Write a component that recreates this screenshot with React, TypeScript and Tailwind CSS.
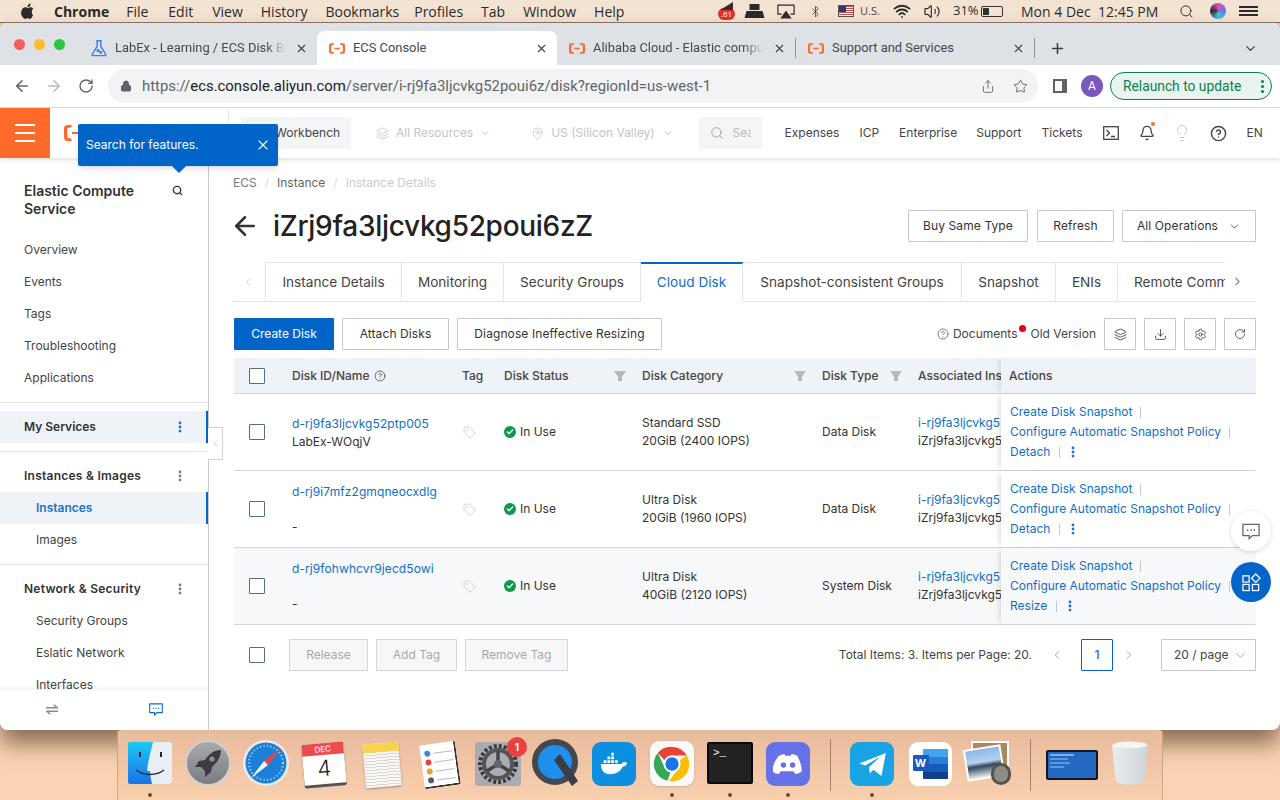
import React from "react";
import { ArrowLeft, ArrowRight, RotateCw, Lock, Share, Star, X, Plus, ChevronDown, ChevronLeft, ChevronRight, Search, MoreVertical, CircleHelp, Tag, Layers, Download, Settings, RotateCw as Rot, Bell, Lightbulb, MapPin, Wifi, Bluetooth, Volume2, Check } from "lucide-react";

const Ali = ({ className = "" }: { className?: string }) => (
  <svg viewBox="0 0 24 16" className={className} fill="#ff6a2b">
    <path d="M8 0H3.5A3.5 3.5 0 0 0 0 3.5v9A3.5 3.5 0 0 0 3.5 16H8l-1-2.4-3-.6a1 1 0 0 1-.8-1V4a1 1 0 0 1 .8-1l3-.6zM16 0h4.500A3.500 3.500 0 0 1 24 3.500v9a3.500 3.500 0 0 1-3.500 3.500H16l1-2.400 3-.6a1 1 0 0 0 .8-1V4a1 1 0 0 0-.8-1l-3-.6zM8 7h8v2H8z" />
  </svg>
);

const Flask = () => (
  <svg viewBox="0 0 20 20" className="w-[18px] h-[18px] shrink-0" fill="none" stroke="#3b82e6" strokeWidth="1.6">
    <path d="M7 2h6M8 2v6L2.500 17a1 1 0 0 0 1 1.500h13a1 1 0 0 0 1-1.500L12 8V2" />
    <circle cx="9" cy="13" r="1" fill="#3b82e6" /><circle cx="12" cy="15" r=".8" fill="#3b82e6" />
  </svg>
);

const Bubble = ({ className = "", stroke, sw = 1.4 }: { className?: string; stroke: string; sw?: number }) => (
  <svg viewBox="0 0 20 18" className={className} fill="none" stroke={stroke} strokeWidth={sw}>
    <path d="M1 1h18v12.500h-7.500L8 17v-3.500H1z" />
    <path d="M5.500 7.500h1.500M9.300 7.500h1.500M13 7.500h1.500" strokeWidth="1.800" />
  </svg>
);

const ChromeTab = ({ icon, title, active, sep, w, fade }: { icon: React.ReactNode; title: string; active?: boolean; sep?: boolean; w: string; fade?: boolean }) => (
  <div className={`${w} h-[34px] flex items-center relative shrink-0 ${active ? "bg-white rounded-t-lg" : ""}`}>
    <div className="w-[36px] flex justify-center shrink-0 pl-1">{icon}</div>
    <span className={`flex-1 text-[12.9px] overflow-hidden whitespace-nowrap text-[#45484d] ${fade ? "[mask-image:linear-gradient(to_right,black_88%,transparent)]" : ""}`}>{title}</span>
    <X className="w-[13px] h-[13px] text-[#3c4043] mx-[9px] shrink-0" strokeWidth={2} />
    {sep && <div className="w-px h-5 bg-[#8d9096] shrink-0" />}
  </div>
);

const Side = ({ children, cls = "" }: { children: React.ReactNode; cls?: string }) => (
  <div className={`h-8 flex items-center text-[12px] text-[#444] ${cls}`}>{children}</div>
);

const Dots = ({ cls = "" }: { cls?: string }) => <MoreVertical className={`w-[14px] h-[14px] ${cls}`} strokeWidth={2.8} />;

const Btn = ({ children, cls = "" }: { children: React.ReactNode; cls?: string }) => (
  <div className={`h-8 border border-[#c4c6cc] rounded-[1px] bg-white flex items-center justify-center text-[12px] tracking-[.1px] text-[#333] ${cls}`}>{children}</div>
);

const Funnel = () => (
  <svg viewBox="0 0 12 12" className="w-[12px] h-[12px]" fill="#b5b7ba"><path d="M0 1h12L8 6.500V11H4V6.500z" /></svg>
);

const Checkbox = () => <div className="w-4 h-4 border border-[#4f6e8e] rounded-[1px] bg-white" />;

const Row = ({ id, name, cat, size, type, last, hl }: { id: string; name: string; cat: string; size: string; type: string; last: string; hl?: boolean }) => (
  <div className={`grid grid-cols-[58px_170px_42px_138px_180px_96px_83px_255px] h-[77px] border-b border-[#d5d6d9] text-[12px] text-[#333] items-center ${hl ? "bg-[#f7f8fa]" : "bg-white"}`}>
    <div className="pl-[15px]"><Checkbox /></div>
    <div className={`flex flex-col self-stretch ${name === "-" ? "justify-between py-[13px]" : "justify-center gap-[3px]"}`}>
      <span className="text-[#0f6fc6] leading-[15px] whitespace-nowrap tracking-[.09px]">{id}</span>
      <span className="leading-[15px]">{name}</span>
    </div>
    <div><Tag className="w-[13px] h-[13px] text-[#c8c9cc] ml-[1px]" strokeWidth={1.5} /></div>
    <div className="flex items-center gap-[4px]">
      <span className="w-3 h-3 rounded-full bg-[#0a9a4a] flex items-center justify-center"><Check className="w-2 h-2 text-white" strokeWidth={4} /></span>
      In Use
    </div>
    <div className="leading-[18px]"><div>{cat}</div><div>{size}</div></div>
    <div>{type}</div>
    <div className="overflow-hidden whitespace-nowrap leading-[18px]"><div className="text-[#0f6fc6]">i-rj9fa3ljcvkg52poui6z</div><div>iZrj9fa3ljcvkg52poui6zZ</div></div>
    <div className={`self-stretch pl-[9px] flex flex-col justify-center leading-[20px] text-[#0f6fc6] shadow-[-4px_0_5px_-2px_rgba(0,0,0,0.12)] ${hl ? "bg-[#f7f8fa]" : "bg-white"}`}>
      <div className="flex items-center">Create Disk Snapshot<span className="w-px h-[11px] bg-[#c4c6cc] ml-[8px]" /></div>
      <div className="flex items-center">Configure Automatic Snapshot Policy<span className="w-px h-[11px] bg-[#c4c6cc] ml-[8px]" /></div>
      <div className="flex items-center">{last}<span className="w-px h-[11px] bg-[#c4c6cc] ml-[9px]" /><Dots cls="ml-[6px]" /></div>
    </div>
  </div>
);

const Slot = ({ children, dot }: { children: React.ReactNode; dot?: boolean }) => (
  <div className="w-[58px] h-full relative flex justify-center pt-[12px] shrink-0">
    {children}
    {dot && <span className="absolute bottom-[3px] left-[27px] w-1 h-1 rounded-full bg-[#6b4a35]" />}
  </div>
);

const DockSep = () => <div className="w-[26px] flex justify-center shrink-0 pt-[9px]"><div className="w-px h-[52px] bg-[#a9826a]" /></div>;

const Finder = () => (
  <svg viewBox="0 0 44 42" className="w-[44px] h-[42px]">
    <defs><linearGradient id="fb" x1="0" y1="0" x2="0" y2="1"><stop offset="0" stopColor="#1cc8f5" /><stop offset="1" stopColor="#1a72e8" /></linearGradient></defs>
    <rect width="44" height="42" rx="2" fill="url(#fb)" />
    <path d="M25 0h17a2 2 0 0 1 2 2v38a2 2 0 0 1-2 2H24c-1-5-2-9-2-13h-3c1-11 4-20 6-29z" fill="#e8eef4" />
    <rect x="11" y="10" width="2" height="5" fill="#223" /><rect x="32" y="10" width="2" height="5" fill="#223" />
    <path d="M8 28c8 6 20 6 28 0" fill="none" stroke="#1b2a40" strokeWidth="1.500" />
  </svg>
);
const Launchpad = () => (
  <svg viewBox="0 0 46 46" className="w-[46px] h-[46px] -mt-[2px]">
    <defs><linearGradient id="lp" x1="0" y1="0" x2="0" y2="1"><stop offset="0" stopColor="#a8aaac" /><stop offset="1" stopColor="#7a7d80" /></linearGradient></defs>
    <circle cx="23" cy="23" r="23" fill="#cdcfd1" /><circle cx="23" cy="23" r="21" fill="url(#lp)" />
    <path d="M36 10c-7 0-12 4-16 10l-6 1-4 6 6 0 4 4 0 6 6-5 1-5c6-5 9-11 9-17z" fill="#3a3c3f" />
    <circle cx="27" cy="19" r="2.600" fill="#8f9295" />
  </svg>
);
const Safari = () => (
  <svg viewBox="0 0 46 46" className="w-[46px] h-[46px] -mt-[2px]">
    <circle cx="23" cy="23" r="23" fill="#e8eaec" /><circle cx="23" cy="23" r="20.500" fill="#1d80d8" />
    <circle cx="23" cy="23" r="17" fill="none" stroke="#bfe0f7" strokeWidth="2" strokeDasharray="1 2.500" />
    <path d="M38 8 25 25l-4-4z" fill="#f0423c" /><path d="M8 38l13-17 4 4z" fill="#f4f4f4" />
  </svg>
);
const Calendar = () => (
  <div className="w-[42px] h-[44px] rotate-[-5deg] bg-[#59595c] rounded-[2px] pb-[3px] mt-[1px]">
    <div className="bg-white h-full rounded-[1px] overflow-hidden flex flex-col items-center shadow-sm">
      <div className="w-full h-[12px] bg-[#ec4c50] text-white text-[8px] leading-[12px] text-center">DEC</div>
      <div className="text-[#222] text-[22px] leading-[26px] font-light">4</div>
    </div>
  </div>
);
const Notes = () => (
  <div className="w-[36px] h-[44px] rotate-[-5deg] bg-[#f8f7f2] shadow-[0_1px_2px_rgba(0,0,0,.35)] mt-[1px] [background-image:repeating-linear-gradient(to_bottom,transparent_0,transparent_2px,#d8d8d4_2px,#d8d8d4_3px)]">
    <div className="h-[9px] bg-[#f8d34f]" />
  </div>
);
const Reminders = () => (
  <div className="w-[36px] h-[44px] rotate-[-8deg] bg-white border-r-2 border-b-2 border-[#333] rounded-[2px] flex flex-col gap-[3px] pl-[4px] pt-[6px] mt-[1px]">
    {["#3a86e8", "#ea4040", "#f39a2e", "#555a60"].map((c) => (
      <div key={c} className="flex items-center gap-[3px]"><span className="w-[6px] h-[6px] rounded-full" style={{ background: c }} /><span className="w-[19px] h-px bg-[#bbb]" /></div>
    ))}
  </div>
);
const Prefs = () => (
  <div className="w-[46px] h-[44px] bg-[#a9acb0] rounded-[3px] flex items-center justify-center relative">
    <svg viewBox="0 0 40 40" className="w-[40px] h-[40px]">
      <circle cx="20" cy="20" r="18" fill="none" stroke="#3a3b3d" strokeWidth="4" strokeDasharray="3 2" />
      <circle cx="20" cy="20" r="14" fill="none" stroke="#555" strokeWidth="4" />
      <path d="M20 20V7M20 20 9 27M20 20l11 7" stroke="#444" strokeWidth="3.500" />
      <circle cx="20" cy="20" r="4" fill="#666" />
    </svg>
    <span className="absolute -top-[5px] -right-[6px] w-[20px] h-[20px] rounded-full bg-[#ee3f3f] text-white text-[10px] font-bold flex items-center justify-center">1</span>
  </div>
);
const Quick = () => (
  <svg viewBox="0 0 48 48" className="w-[48px] h-[48px] -mt-[3px]">
    <circle cx="23" cy="23" r="20" fill="#1f8fee" stroke="#45494f" strokeWidth="6" />
    <path d="M22 21l6-6 18 27-6 5z" fill="#3a3d42" />
  </svg>
);
const Docker = () => (
  <div className="w-[44px] h-[44px] rounded-[9px] bg-[#0d8fe0] flex items-center justify-center">
    <svg viewBox="0 0 32 24" className="w-[30px] h-[24px]" fill="#fff">
      <path d="M2 12h22c1-2 4-3 6-1-1 3-3 4-5 4-2 5-7 8-13 8-7 0-10-5-10-11z" />
      <path d="M5 8h3v3H5zM9 8h3v3H9zM13 8h3v3h-3zM17 8h3v3h-3zM9 4h3v3H9zM13 4h3v3h-3zM13 0h3v3h-3z" />
    </svg>
  </div>
);
const ChromeIcon = () => (
  <div className="w-[44px] h-[45px] rounded-[9px] bg-[#fafafa] flex items-center justify-center shadow-[0_1px_2px_rgba(0,0,0,.15)] -mt-[1px]">
    <svg viewBox="0 0 40 40" className="w-[38px] h-[38px]">
      <path d="M20 2a18 18 0 0 1 15.600 9H20a9 9 0 0 0-8 5L5 8.500A18 18 0 0 1 20 2z" fill="#ea4335" />
      <path d="M5 8.500 12.500 24a9 9 0 0 0 6 5L15 37.500A18 18 0 0 1 5 8.500z" fill="#34a853" />
      <path d="M35.600 11A18 18 0 0 1 17 38l8-11a9 9 0 0 0 3-11z" fill="#fbbc04" />
      <circle cx="20" cy="20" r="9" fill="#fff" /><circle cx="20" cy="20" r="7" fill="#1a73e8" />
    </svg>
  </div>
);
const Term = () => (
  <div className="w-[46px] h-[42px] bg-[#222] border-2 border-[#0a0a0a] rounded-[2px] text-white text-[11px] leading-[13px] pl-[4px] pt-[3px] font-['Liberation_Mono',monospace]">&gt;_</div>
);
const Discord = () => (
  <div className="w-[44px] h-[44px] rounded-[9px] bg-[#6673e8] flex items-center justify-center">
    <svg viewBox="0 0 32 24" className="w-[30px] h-[22px]" fill="#fff">
      <path d="M6 3c3-1 5-2 6-2l1 2h6l1-2c2 0 4 1 6 2 3 5 5 11 5 17-2 2-5 3-7 3l-2-3h-14l-2 3c-2 0-5-1-7-3 0-6 3-12 7-17z" />
      <circle cx="11" cy="13" r="3" fill="#6673e8" /><circle cx="21" cy="13" r="3" fill="#6673e8" />
    </svg>
  </div>
);
const Telegram = () => (
  <div className="w-[44px] h-[44px] rounded-[9px] bg-[#18a3e4] flex items-center justify-center">
    <svg viewBox="0 0 32 28" className="w-[29px] h-[25px]" fill="#fff"><path d="M1 13 31 1l-5 26-9-7-4 4-1-7 13-12-17 10z" /></svg>
  </div>
);
const Word = () => (
  <div className="w-[43px] h-[44px] rounded-[9px] bg-white flex items-center justify-center relative">
    <div className="w-[25px] h-[30px] ml-[10px] flex flex-col rounded-[1px] overflow-hidden">
      <div className="flex-1 bg-[#41a5ee]" /><div className="flex-1 bg-[#2b7cd3]" /><div className="flex-1 bg-[#185abd]" /><div className="flex-1 bg-[#103f91]" />
    </div>
    <span className="absolute left-[4px] top-[13px] w-[16px] h-[16px] bg-[#185abd] text-white text-[11px] font-bold rounded-[1px] flex items-center justify-center">W</span>
  </div>
);
const Preview = () => (
  <div className="w-[46px] h-[44px] relative -mt-[1px]">
    <div className="absolute left-[6px] top-0 w-[38px] h-[30px] bg-[#a68a66] border-2 border-white" />
    <div className="absolute left-0 top-[6px] w-[38px] h-[32px] rotate-[-9deg] border-2 border-white bg-[linear-gradient(to_bottom,#8db7e8_0%,#b5d0ee_45%,#30485c_60%,#e8eef2_100%)]" />
    <div className="absolute right-0 bottom-0 w-[20px] h-[22px] rounded-full bg-[#8e8c88] border-[3px] border-[#55534f]" />
  </div>
);
const Thumb = () => (
  <div className="w-[52px] h-[30px] mt-[8px] bg-[#2469c0] border-2 border-[#15191f] rounded-[2px] flex flex-col gap-[2px] p-[2px]">
    <div className="h-[2px] w-[24px] bg-[#7fb0e8]" /><div className="h-[2px] w-[18px] bg-[#5a98e0]" /><div className="h-[2px] w-[20px] bg-[#5a98e0]" /><div className="h-[2px] w-[14px] bg-[#5a98e0]" />
  </div>
);
const Trash = () => (
  <svg viewBox="0 0 40 48" className="w-[38px] h-[48px] -mt-[3px]">
    <defs><linearGradient id="tr" x1="0" y1="0" x2="1" y2="0"><stop offset="0" stopColor="#e9ecee" /><stop offset="1" stopColor="#cfd4d8" /></linearGradient></defs>
    <path d="M1 5c8-5 30-5 38 0l-4 38c-2 5-28 5-30 0z" fill="url(#tr)" />
    <ellipse cx="20" cy="5" rx="18" ry="3.500" fill="#f4f6f7" />
  </svg>
);

const Tab = ({ t, w, active, last }: { t: string; w: string; active?: boolean; last?: boolean }) => (
  <div className={`${w} h-[40px] shrink-0 flex items-center text-[13.6px] whitespace-nowrap overflow-hidden border-r border-[#e3e4e6] ${last ? "justify-start pl-[16px] border-r-0" : "justify-center"} ${active ? "text-[#0f6fc6] border-t-2 border-t-[#0064c8] bg-white border-b border-b-white -mb-px" : "text-[#444] border-t border-t-[#e3e4e6]"}`}>{t}</div>
);

export default function App() {
  return (
    <div className="w-[1280px] h-[800px] overflow-hidden relative bg-[linear-gradient(to_bottom,#f0c6a8,#fbd3b2)] font-['Inter',sans-serif] flex flex-col">
      {/* mac menu bar */}
      <div className="h-[23px] shrink-0 bg-[#f3e3d3] flex items-center text-[14px] text-[#2b2b2b] font-['Open_Sans',sans-serif] pl-[21px] pr-[22px] border-b border-[#8a7566]">
        <svg viewBox="0 0 14 17" className="w-[13px] h-[16px] mr-[20px]" fill="#2b2b2b"><path d="M11.600 9c0-2 1.600-3 1.700-3-1-1.400-2.400-1.600-3-1.600-1.200-.1-2.400.8-3 .8s-1.600-.8-2.700-.7C3.200 4.500 1.900 5.300 1.200 6.500-.3 9-.8 13 2.700 16c.7 1 1.500 1 2 1 .8 0 1.200-.6 2.400-.6s1.500.6 2.500.6c1 0 1.700-1 2.300-2 .7-1 1-2 1-2.100-.1 0-1.300-1-1.300-3.900zM9.500 3c.6-.7 1-1.700.9-2.700-.9 0-1.900.6-2.500 1.300-.5.600-1 1.600-.9 2.600 1 .1 2-.5 2.500-1.200z" /></svg>
        <span className="font-bold mr-[17px]">Chrome</span>
        <span className="mr-[20px]">File</span><span className="mr-[19px]">Edit</span><span className="mr-[18px]">View</span><span className="mr-[18px]">History</span><span className="mr-[15px]">Bookmarks</span><span className="mr-[18px]">Profiles</span><span className="mr-[18px]">Tab</span><span className="mr-[18px]">Window</span><span>Help</span>
        <div className="ml-auto flex items-center text-[14px]">
          <span className="relative w-[17px] h-[12px] rounded-full bg-[#e0322a] text-white text-[8px] flex items-center justify-center mt-[6px] mr-[9px] leading-none">
            .61
            <svg viewBox="0 0 16 8" className="absolute -top-[6px] left-0 w-[16px] h-[8px]" fill="#3a2a25"><path d="M2 8 15 0v8z" /></svg>
          </span>
          <svg viewBox="0 0 20 14" className="w-[21px] h-[14px] mr-[12px]" fill="#2b2b2b"><path d="M5 0h10v6H5zM2 7h16l2 7H0z" /></svg>
          <svg viewBox="0 0 20 16" className="w-[18px] h-[15px] mr-[14px]" fill="none" stroke="#2b2b2b" strokeWidth="1.300"><path d="M5 11H1V1h18v10h-4" /><path d="M10 8l5 7H5z" fill="#2b2b2b" /></svg>
          <Bluetooth className="w-[13px] h-[15px] mr-[16px]" strokeWidth={1.300} />
          <span className="w-[16px] h-[12px] mr-[6px] border border-[#555] bg-[repeating-linear-gradient(to_bottom,#c0504d_0,#c0504d_1px,#fff_1px,#fff_2px)] relative"><span className="absolute left-0 top-0 w-[7px] h-[6px] bg-[#2a3a78]" /></span>
          <span className="text-[11px] w-[20px] mr-[12px] text-[#444]">U.S.</span>
          <Wifi className="w-[20px] h-[18px] mr-[10px]" strokeWidth={2.400} />
          <Volume2 className="w-[20px] h-[17px] mr-[11px]" strokeWidth={1.600} />
          <span className="text-[13px] w-[23px] mr-[5px] whitespace-nowrap">31%</span>
          <span className="w-[22px] h-[11px] border border-[#333] rounded-[2px] flex p-[1px] mr-[18px]"><span className="w-[6px] bg-[#333]" /></span>
          <span className="mr-[8px] w-[69px] whitespace-nowrap">Mon 4 Dec</span><span className="mr-[21px] w-[60px] whitespace-nowrap">12:45 PM</span>
          <Search className="w-[15px] h-[15px] mr-[16px]" strokeWidth={1.500} />
          <span className="w-[16px] h-[16px] rounded-full bg-[conic-gradient(#e54ea8,#5b7bea,#49c6d8,#2a2a38,#e54ea8)] mr-[13px]" />
          <span className="w-[19px] flex flex-col gap-[2.500px]"><span className="h-[1.500px] bg-[#2b2b2b]" /><span className="h-[1.500px] bg-[#2b2b2b]" /><span className="h-[1.500px] bg-[#2b2b2b]" /></span>
        </div>
      </div>

      {/* browser window */}
      <div className="w-[1280px] h-[707px] shrink-0 flex flex-col rounded-[8px] overflow-hidden bg-white shadow-[0_14px_22px_rgba(50,30,15,0.55)] relative z-10">
        <div className="h-[42px] bg-[#dee1e6] flex items-end shrink-0 pl-[79px] font-['Roboto',sans-serif]">
          <div className="absolute left-[14px] top-[16px] flex gap-[9px]">
            <span className="w-[11px] h-[11px] rounded-full bg-[#f25f58]" /><span className="w-[11px] h-[11px] rounded-full bg-[#fbbc2e]" /><span className="w-[11px] h-[11px] rounded-full bg-[#29c840]" />
          </div>
          <ChromeTab w="w-[238px]" icon={<Flask />} title="LabEx - Learning / ECS Disk Basics" fade />
          <ChromeTab w="w-[240px]" icon={<Ali className="w-[16px] h-[11px]" />} title="ECS Console" active />
          <ChromeTab w="w-[239px]" icon={<Ali className="w-[16px] h-[11px]" />} title="Alibaba Cloud - Elastic compute service" sep fade />
          <ChromeTab w="w-[239px]" icon={<Ali className="w-[16px] h-[11px]" />} title="Support and Services" sep />
          <Plus className="w-[17px] h-[17px] text-[#3c4043] ml-[14px] mb-[8px]" strokeWidth={2.200} />
          <ChevronDown className="w-[15px] h-[15px] text-[#3c4043] ml-[177px] mb-[9px]" />
        </div>
        <div className="h-[43px] shrink-0 flex items-center border-b border-[#dadce0] font-['Roboto',sans-serif] pl-[13px]">
          <ArrowLeft className="w-[18px] h-[18px] text-[#5f6368]" strokeWidth={2} />
          <ArrowRight className="w-[18px] h-[18px] text-[#b6b8bb] ml-[14px]" strokeWidth={2} />
          <RotateCw className="w-[16px] h-[16px] text-[#5f6368] ml-[15px]" strokeWidth={2} />
          <div className="w-[930px] h-[34px] ml-[14px] rounded-full bg-[#f1f3f4] flex items-center pl-[12px] text-[14.9px]">
            <Lock className="w-[12px] h-[12px] text-[#5f6368] mr-[10px]" fill="#5f6368" />
            <span className="text-[#5f6368]">https://<span className="text-[#202124]">ecs.console.aliyun.com</span>/server/i-rj9fa3ljcvkg52poui6z/disk?regionId=us-west-1</span>
            <Share className="w-[14px] h-[15px] text-[#5f6368] ml-auto" strokeWidth={1.500} />
            <Star className="w-[15px] h-[15px] text-[#5f6368] ml-[18px] mr-[10px]" strokeWidth={1.500} />
          </div>
          <div className="w-[14px] h-[14px] ml-[15px] border-2 border-[#5f6368] border-r-[5px] bg-white" />
          <div className="w-[22px] h-[22px] ml-[14px] rounded-full bg-[#7b57bd] text-white text-[12px] flex items-center justify-center">A</div>
          <div className="w-[162px] h-[28px] ml-[7px] rounded-full border border-[#0d7f4e] bg-[#e9f4ee] text-[#0d7f4e] text-[13.8px] flex items-center pl-[12px]">
            Relaunch to update
            <span className="ml-auto mr-[7px] flex flex-col gap-[2px]"><span className="w-[3px] h-[3px] rounded-full bg-[#0d7f4e]" /><span className="w-[3px] h-[3px] rounded-full bg-[#0d7f4e]" /><span className="w-[3px] h-[3px] rounded-full bg-[#0d7f4e]" /></span>
          </div>
        </div>

        {/* console top nav */}
        <div className="h-[50px] shrink-0 flex items-center bg-white shadow-[0_2px_4px_rgba(0,0,0,0.12)] relative z-20 text-[12px] text-[#444]">
          <div className="w-[50px] h-[50px] bg-[#ff6a2b] flex flex-col items-center justify-center gap-[6px]">
            <span className="w-[20px] h-[2px] bg-white" /><span className="w-[20px] h-[2px] bg-white" /><span className="w-[20px] h-[2px] bg-white" />
          </div>
          <div className="w-[179px] h-full border-r border-[#e8e9eb] pl-[14px] flex items-center"><Ali className="w-[24px] h-[16px]" /></div>
          <div className="w-[110px] h-[32px] ml-[12px] bg-[#f4f5f7] flex items-center pl-[34px]">Workbench</div>
          <div className="ml-[25px] flex items-center text-[#c2c4c8]">
            <Layers className="w-[13px] h-[13px] mr-[7px]" strokeWidth={1.500} />All Resources
            <ChevronDown className="w-[12px] h-[12px] ml-[6px]" />
          </div>
          <div className="ml-[40px] flex items-center text-[#c2c4c8]">
            <MapPin className="w-[13px] h-[13px] mr-[7px]" strokeWidth={1.500} />US (Silicon Valley)
            <ChevronDown className="w-[12px] h-[12px] ml-[7px]" />
          </div>
          <div className="w-[63px] h-[32px] ml-[25px] bg-[#f4f5f7] flex items-center pl-[11px] text-[#bbb] overflow-hidden">
            <Search className="w-[14px] h-[14px] text-[#999] mr-[9px] shrink-0" strokeWidth={1.500} /><span className="w-[18px] overflow-hidden whitespace-nowrap">Search</span>
          </div>
          <span className="ml-[23px]">Expenses</span><span className="ml-[20px]">ICP</span><span className="ml-[20px]">Enterprise</span><span className="ml-[19px]">Support</span><span className="ml-[20px]">Tickets</span>
          <svg viewBox="0 0 16 14" className="w-[16px] h-[14px] ml-[20px]" fill="none" stroke="#444" strokeWidth="1.300"><rect x=".7" y=".7" width="14.600" height="12.600" /><path d="M3.500 4 6.500 7l-3 3M8 10.500h4" /></svg>
          <span className="relative ml-[20px]"><Bell className="w-[16px] h-[16px]" strokeWidth={2} /><span className="absolute -top-[3px] right-0 w-[4px] h-[4px] rounded-full bg-[#ff6a2b]" /></span>
          <Lightbulb className="w-[18px] h-[18px] ml-[18px] text-[#c4c6c9]" strokeWidth={1.300} />
          <CircleHelp className="w-[17px] h-[17px] ml-[19px]" strokeWidth={2} />
          <span className="ml-[20px]">EN</span>
        </div>

        {/* console body */}
        <div className="flex-1 flex min-h-0 relative">
          <aside className="w-[209px] shrink-0 border-r border-[#c9cacc] relative flex flex-col overflow-hidden">
            <div className="flex-1 min-h-0 overflow-hidden pt-[24px]">
              <div className="pl-[24px] pr-[25px] flex justify-between items-start text-[14px] leading-[18px] font-semibold text-[#333]">
                <span>Elastic Compute<br />Service</span>
                <Search className="w-[11px] h-[11px] mt-[3px]" strokeWidth={3} />
              </div>
              <div className="mt-[16px]">
                {["Overview", "Events", "Tags", "Troubleshooting", "Applications"].map((t) => <Side key={t} cls="pl-[24px]">{t}</Side>)}
              </div>
              <div className="h-px bg-[#e3e4e6] mt-[8px]" />
              <Side cls="mt-[8px] pl-[24px] pr-[19px] justify-between bg-[#eff3f8] font-semibold border-r-2 border-[#0064c8] !text-[#333]">My Services<Dots cls="text-[#0f6fc6]" /></Side>
              <div className="h-px bg-[#e3e4e6] mt-[8px]" />
              <Side cls="mt-[8px] pl-[24px] pr-[21px] justify-between font-semibold tracking-[.25px] !text-[#333]">Instances &amp; Images<Dots cls="text-[#777]" /></Side>
              <Side cls="pl-[36px] bg-[#eff3f8] font-semibold !text-[#1a74c9] border-r-2 border-[#0064c8]">Instances</Side>
              <Side cls="pl-[36px]">Images</Side>
              <div className="h-px bg-[#e3e4e6] mt-[8px]" />
              <Side cls="mt-[8px] pl-[24px] pr-[21px] justify-between font-semibold tracking-[.25px] !text-[#333]">Network &amp; Security<Dots cls="text-[#777]" /></Side>
              {["Security Groups", "Eslatic Network", "Interfaces"].map((t) => <Side key={t} cls="pl-[36px]">{t}</Side>)}
            </div>
            <div className="h-[40px] shrink-0 bg-white shadow-[0_-2px_6px_rgba(0,0,0,0.07)] flex items-center relative pb-[2px]">
              <svg viewBox="0 0 14 12" className="w-[12px] h-[11px] ml-[46px]" fill="none" stroke="#8a8a8a" strokeWidth="1.600"><path d="M0 4h13L9 .5M14 8H1l4 3.500" /></svg>
              <Bubble className="w-[14px] h-[13px] ml-[91px]" stroke="#0f6fc6" sw={1.6} />
            </div>
          </aside>
          <div className="absolute left-[208px] top-[269px] w-[15px] h-[33px] bg-white border border-l-0 border-[#d0d1d4] flex items-center justify-center z-10">
            <ChevronLeft className="w-[11px] h-[11px] text-[#c0c1c4]" />
          </div>

          <main className="flex-1 min-w-0 pl-[24px] pr-[24px] pt-[17px] flex flex-col">
            <div className="flex items-center text-[12px] leading-[16px] text-[#777]">
              <span>ECS</span><span className="mx-[8px] text-[#ddd]">/</span><span className="text-[#666]">Instance</span><span className="mx-[8px] text-[#ddd]">/</span><span className="text-[#ccc]">Instance Details</span>
            </div>
            <div className="flex items-center h-[34px] mt-[18px]">
              <ArrowLeft className="w-[30px] h-[30px] text-[#333] -ml-[3px]" strokeWidth={2} />
              <span className="text-[28px] font-medium text-[#222] ml-[13px] tracking-[-0.3px]">iZrj9fa3ljcvkg52poui6zZ</span>
              <div className="ml-auto flex">
                <Btn cls="w-[120px]">Buy Same Type</Btn>
                <Btn cls="w-[77px] ml-[9px]">Refresh</Btn>
                <Btn cls="w-[134px] ml-[8px] gap-[10px]">All Operations<ChevronDown className="w-[13px] h-[13px]" strokeWidth={1.500} /></Btn>
              </div>
            </div>
            <div className="flex h-[40px] mt-[19px] border-b border-[#e3e4e6] items-start relative">
              <div className="w-[32px] h-full flex items-center justify-end pr-[11px]"><ChevronLeft className="w-[12px] h-[12px] text-[#ccc]" /></div>
              <div className="border-l border-[#e3e4e6] h-full" />
              <Tab t="Instance Details" w="w-[136px]" />
              <Tab t="Monitoring" w="w-[102px]" />
              <Tab t="Security Groups" w="w-[137px]" />
              <Tab t="Cloud Disk" w="w-[102px]" active />
              <Tab t="Snapshot-consistent Groups" w="w-[219px]" />
              <Tab t="Snapshot" w="w-[94px]" />
              <Tab t="ENIs" w="w-[62px]" />
              <Tab t="Remote Command" w="w-[107px]" last />
              <div className="flex-1 h-full flex items-center pl-[6px]"><ChevronRight className="w-[13px] h-[13px] text-[#888]" /></div>
            </div>
            <div className="flex items-center mt-[16px] h-[32px] text-[12px] pl-[1px]">
              <div className="w-[100px] h-8 bg-[#0064c8] text-white flex items-center justify-center rounded-[1px]">Create Disk</div>
              <Btn cls="w-[107px] ml-[8px]">Attach Disks</Btn>
              <Btn cls="w-[205px] ml-[8px]">Diagnose Ineffective Resizing</Btn>
              <CircleHelp className="w-[12px] h-[12px] text-[#555] ml-auto mr-[4px]" strokeWidth={1.500} />
              <span className="text-[#444]">Documents</span>
              <span className="w-[7px] h-[7px] rounded-full bg-[#e3001b] mx-[2px] -mt-[12px]" />
              <span className="text-[#444] ml-[2px] mr-[8px]">Old Version</span>
              <div className="flex gap-[8px]">
                <Btn cls="w-[32px]"><Layers className="w-[13px] h-[13px]" strokeWidth={1.500} /></Btn>
                <Btn cls="w-[32px]"><Download className="w-[13px] h-[13px]" strokeWidth={1.500} /></Btn>
                <Btn cls="w-[32px]"><Settings className="w-[13px] h-[13px]" strokeWidth={1.500} /></Btn>
                <Btn cls="w-[32px]"><Rot className="w-[12px] h-[12px]" strokeWidth={1.500} /></Btn>
              </div>
            </div>
            <div className="mt-[8px] ml-[1px]">
              <div className="grid grid-cols-[58px_170px_42px_138px_180px_96px_83px_255px] h-[36px] bg-[#eff3f8] border-b border-[#d5d6d9] text-[12px] font-medium text-[#444] items-center">
                <div className="pl-[15px]"><Checkbox /></div>
                <div className="flex items-center gap-[4px]">Disk ID/Name<CircleHelp className="w-[12px] h-[12px]" strokeWidth={1.500} /></div>
                <div>Tag</div>
                <div className="flex items-center justify-between pr-[16px]">Disk Status<Funnel /></div>
                <div className="flex items-center justify-between pr-[16px]">Disk Category<Funnel /></div>
                <div className="flex items-center gap-[11px]">Disk Type<Funnel /></div>
                <div className="overflow-hidden whitespace-nowrap">Associated Instance</div>
                <div className="self-stretch flex items-center pl-[8px] bg-[#eff3f8] shadow-[-4px_0_5px_-2px_rgba(0,0,0,0.12)]">Actions</div>
              </div>
              <Row id="d-rj9fa3ljcvkg52ptp005" name="LabEx-WOqjV" cat="Standard SSD" size="20GiB (2400 IOPS)" type="Data Disk" last="Detach" />
              <Row id="d-rj9i7mfz2gmqneocxdlg" name="-" cat="Ultra Disk" size="20GiB (1960 IOPS)" type="Data Disk" last="Detach" />
              <Row id="d-rj9fohwhcvr9jecd5owi" name="-" cat="Ultra Disk" size="40GiB (2120 IOPS)" type="System Disk" last="Resize" hl />
            </div>
            <div className="flex items-center mt-[14px] h-[32px] text-[12px] ml-[1px]">
              <div className="w-[55px] pl-[15px]"><Checkbox /></div>
              <div className="w-[79px] h-8 bg-[#f7f7f8] border border-[#d5d6d9] text-[#a8a9ac] flex items-center justify-center">Release</div>
              <div className="w-[81px] h-8 ml-[8px] bg-[#f7f7f8] border border-[#d5d6d9] text-[#a8a9ac] flex items-center justify-center">Add Tag</div>
              <div className="w-[103px] h-8 ml-[8px] bg-[#f7f7f8] border border-[#d5d6d9] text-[#a8a9ac] flex items-center justify-center">Remove Tag</div>
              <span className="ml-auto text-[#444]">Total Items: 3. Items per Page: 20.</span>
              <ChevronLeft className="w-[14px] h-[14px] text-[#999] ml-[18px]" strokeWidth={1.500} />
              <div className="w-[32px] h-[32px] ml-[17px] border border-[#0064c8] rounded-[1px] text-[#0f6fc6] font-medium flex items-center justify-center">1</div>
              <ChevronRight className="w-[14px] h-[14px] text-[#999] ml-[9px]" strokeWidth={1.500} />
              <div className="w-[95px] h-8 ml-[25px] border border-[#c4c6cc] rounded-[1px] flex items-center pl-[12px] gap-[4px] text-[#444]">20 / page<ChevronDown className="w-[15px] h-[15px] text-[#888]" strokeWidth={1.200} /></div>
            </div>
          </main>

          {/* floating buttons */}
          <div className="absolute right-[9px] top-[353px] w-[40px] h-[40px] rounded-full bg-white shadow-[0_1px_5px_rgba(0,0,0,0.15)] flex items-center justify-center">
            <Bubble className="w-[18px] h-[17px]" stroke="#666" />
          </div>
          <div className="absolute right-[9px] top-[404px] w-[40px] h-[40px] rounded-full bg-[#0064c8] flex items-center justify-center">
            <svg viewBox="0 0 20 20" className="w-[19px] h-[19px]" fill="none" stroke="#fff" strokeWidth="1.300"><rect x="1" y="3" width="6.500" height="6.500" /><path d="M14.500 1 19 5.500 14.500 10 10 5.500z" /><rect x="1" y="12" width="6.500" height="6.500" /><rect x="11" y="12" width="6.500" height="6.500" /></svg>
          </div>
        </div>

        <div className="absolute left-[78px] top-[101px] w-[200px] h-[42px] bg-[#0064c8] rounded-[2px] shadow-md z-30 flex items-center pl-[8px] pr-[7px] text-[12px] text-white">
          Search for features.
          <X className="w-[16px] h-[16px] ml-auto" strokeWidth={1.600} />
          <span className="absolute left-[96px] -bottom-[5px] w-[10px] h-[10px] bg-[#0064c8] rotate-45" />
        </div>
      </div>

      {/* dock */}
      <div className="absolute left-[117px] top-[730px] z-20 w-[1046px] h-[70px] rounded-t-[4px] bg-[linear-gradient(to_bottom,#e9bb9d,#f8d0ae)] border-l border-r border-[#a9826a]/50 flex pl-[3px]">
        <Slot dot><Finder /></Slot>
        <Slot><Launchpad /></Slot>
        <Slot><Safari /></Slot>
        <Slot><Calendar /></Slot>
        <Slot><Notes /></Slot>
        <Slot><Reminders /></Slot>
        <Slot><Prefs /></Slot>
        <Slot><Quick /></Slot>
        <Slot><Docker /></Slot>
        <Slot dot><ChromeIcon /></Slot>
        <Slot dot><Term /></Slot>
        <Slot dot><Discord /></Slot>
        <DockSep />
        <Slot dot><Telegram /></Slot>
        <Slot><Word /></Slot>
        <Slot><Preview /></Slot>
        <DockSep />
        <Slot><Thumb /></Slot>
        <Slot><Trash /></Slot>
      </div>
    </div>
  );
}
